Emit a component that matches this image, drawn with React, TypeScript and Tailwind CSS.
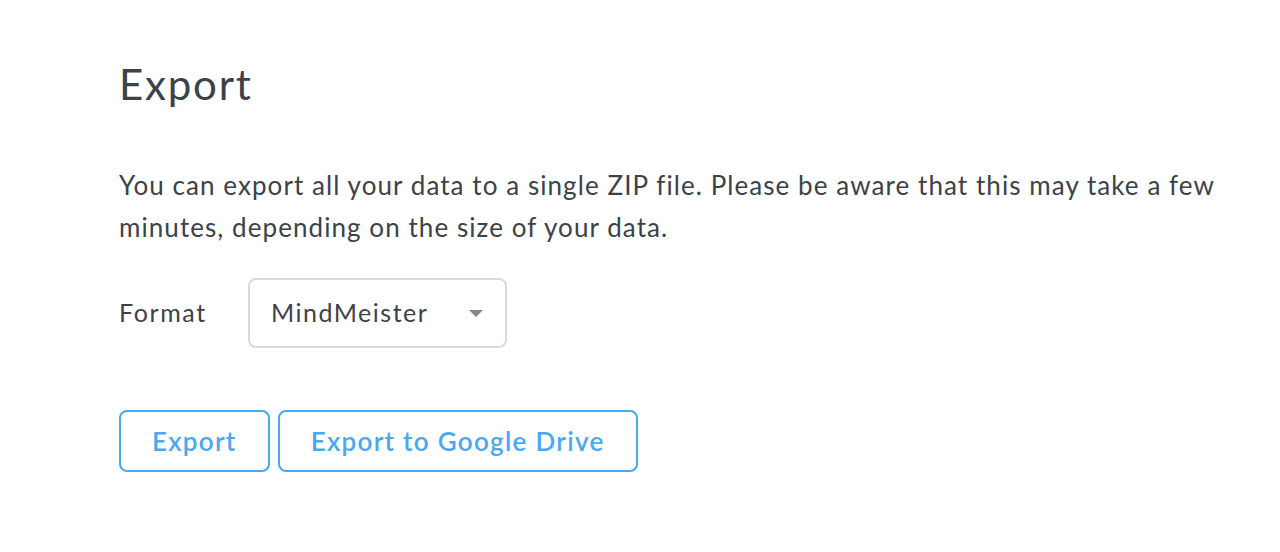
export default function App() {
  return (
    <div
      className="min-h-[552px] w-[1280px] bg-white pl-[119px] pt-[57px] text-[#3b4249]"
      style={{ fontFamily: 'Lato, "Noto Sans", sans-serif' }}
    >
      <h1 className="text-[42px] leading-[54px] font-normal tracking-[1.8px]">Export</h1>

      <p className="mt-[53px] max-w-[1120px] text-[26px] leading-[42px] tracking-[1.07px]">
        You can export all your data to a single ZIP file. Please be aware that this may take a few
        minutes, depending on the size of your data.
      </p>

      <div className="mt-[30px] flex items-center">
        <span className="w-[129px] text-[25px] tracking-[1.6px]">Format</span>
        <button className="flex h-[70px] w-[259px] items-center justify-between rounded-[8px] border-2 border-[#d9d9d9] pr-[22px] pl-[21px] text-[25px] tracking-[1.5px] text-[#3b4249]">
          <span>MindMeister</span>
          <svg width="14" height="7" viewBox="0 0 14 7" className="fill-[#7d8a93]">
            <path d="M0 0h14L7 7z" />
          </svg>
        </button>
      </div>

      <div className="mt-[62px] flex gap-[8px]">
        <button className="h-[62px] rounded-[8px] border-2 border-[#4aa8f3] px-[31px] text-[26px] font-semibold tracking-[1.3px] text-[#4aa8f3]">
          Export
        </button>
        <button className="h-[62px] rounded-[8px] border-2 border-[#4aa8f3] px-[31px] text-[26px] font-semibold tracking-[1.3px] text-[#4aa8f3]">
          Export to Google Drive
        </button>
      </div>
    </div>
  )
}
